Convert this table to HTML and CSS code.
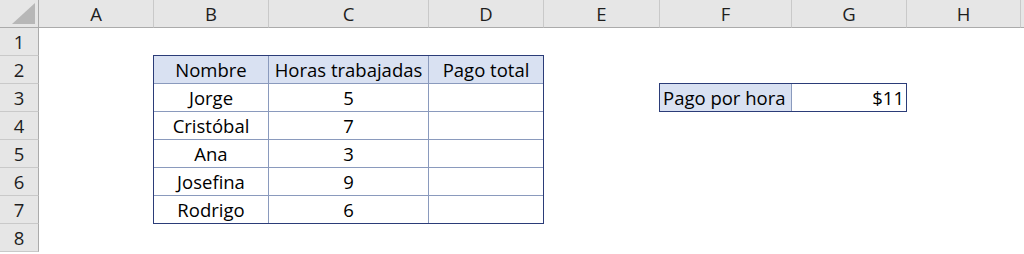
FILE: index.html
```html
<!DOCTYPE html>
<html lang="es">
<head>
<meta charset="utf-8">
<title>Pago por horas</title>
<link rel="stylesheet" href="styles.css">
</head>
<body>
<div class="sheet">
  <div class="corner">
    <svg class="corner-mark" width="24" height="22" viewBox="0 0 24 22"><polygon points="23,0 23,21 0,21" fill="#b7b7b7"/></svg>
  </div>
  <div class="col-head">A</div>
  <div class="col-head">B</div>
  <div class="col-head">C</div>
  <div class="col-head">D</div>
  <div class="col-head">E</div>
  <div class="col-head">F</div>
  <div class="col-head">G</div>
  <div class="col-head">H</div>
  <div class="col-head tail"></div>

  <div class="row-head r1">1</div>
  <div class="row-head r2">2</div>
  <div class="row-head r3">3</div>
  <div class="row-head r4">4</div>
  <div class="row-head r5">5</div>
  <div class="row-head r6">6</div>
  <div class="row-head r7">7</div>
  <div class="row-head r8">8</div>

  <div class="data-table">
    <div class="cell head">Nombre</div>
    <div class="cell head">Horas trabajadas</div>
    <div class="cell head last-col">Pago total</div>

    <div class="cell">Jorge</div>
    <div class="cell">5</div>
    <div class="cell last-col"></div>

    <div class="cell">Cristóbal</div>
    <div class="cell">7</div>
    <div class="cell last-col"></div>

    <div class="cell">Ana</div>
    <div class="cell">3</div>
    <div class="cell last-col"></div>

    <div class="cell">Josefina</div>
    <div class="cell">9</div>
    <div class="cell last-col"></div>

    <div class="cell last-row">Rodrigo</div>
    <div class="cell last-row">6</div>
    <div class="cell last-row last-col"></div>
  </div>

  <div class="rate-box">
    <div class="cell head left">Pago por hora</div>
    <div class="cell right last-col">$11</div>
  </div>
</div>
</body>
</html>
```

FILE: styles.css
```css
* {
  box-sizing: border-box;
}

html, body {
  margin: 0;
  padding: 0;
  background: #ffffff;
}

body {
  font-family: "Open Sans", "Noto Sans", sans-serif;
  font-size: 18.5px;
  color: #000000;
  width: 1024px;
  height: 254px;
  overflow: hidden;
}

/* worksheet: row-number column, columns A..H, then the remaining sliver */
.sheet {
  display: grid;
  grid-template-columns: 39px 115px 115px 160px 115px 116px 132px 115px 114px 1fr;
  grid-template-rows: repeat(9, 28px);
}

.corner {
  grid-column: 1;
  grid-row: 1;
  background: #e6e6e6;
  border-right: 1px solid #ababab;
  border-bottom: 1px solid #ababab;
  display: flex;
  align-items: flex-end;
  justify-content: flex-end;
  padding: 0 2px 2px 0;
}

.corner-mark {
  display: block;
}

.col-head {
  grid-row: 1;
  background: #e6e6e6;
  border-right: 1px solid #c9c9c9;
  border-bottom: 1px solid #ababab;
  display: flex;
  align-items: center;
  justify-content: center;
  color: #1e1e1e;
  line-height: 1;
  padding-top: 1px;
}

.col-head.tail {
  border-right: none;
}

.row-head {
  grid-column: 1;
  background: #e6e6e6;
  border-right: 1px solid #ababab;
  border-bottom: 1px solid #c9c9c9;
  display: flex;
  align-items: center;
  justify-content: center;
  color: #1e1e1e;
  line-height: 1;
  padding-top: 1px;
}

.r1 { grid-row: 2; }
.r2 { grid-row: 3; }
.r3 { grid-row: 4; }
.r4 { grid-row: 5; }
.r5 { grid-row: 6; }
.r6 { grid-row: 7; }
.r7 { grid-row: 8; }
.r8 { grid-row: 9; }

/* bordered ranges sit on the sheet's grid lines, hence the -1px pull */
.data-table {
  grid-column: 3 / 6;
  grid-row: 3 / 9;
  margin: -1px 0 0 -1px;
  border: 1px solid #2b3c78;
  display: grid;
  grid-template-columns: 115px 160px 1fr;
  grid-template-rows: repeat(5, 28px) 1fr;
}

.rate-box {
  grid-column: 7 / 9;
  grid-row: 4;
  margin: -1px 0 0 -1px;
  border: 1px solid #2b3c78;
  display: grid;
  grid-template-columns: 132px 1fr;
}

.cell {
  border-right: 1px solid #8a9abd;
  border-bottom: 1px solid #8a9abd;
  display: flex;
  align-items: center;
  justify-content: center;
  line-height: 1;
  padding-top: 2px;
  white-space: nowrap;
}

.cell.head {
  background: #d9e1f2;
}

.cell.last-col {
  border-right: none;
}

.cell.last-row,
.rate-box .cell {
  border-bottom: none;
}

.cell.left {
  justify-content: flex-start;
  padding-left: 3px;
}

.cell.right {
  justify-content: flex-end;
  padding-right: 2px;
}
```
